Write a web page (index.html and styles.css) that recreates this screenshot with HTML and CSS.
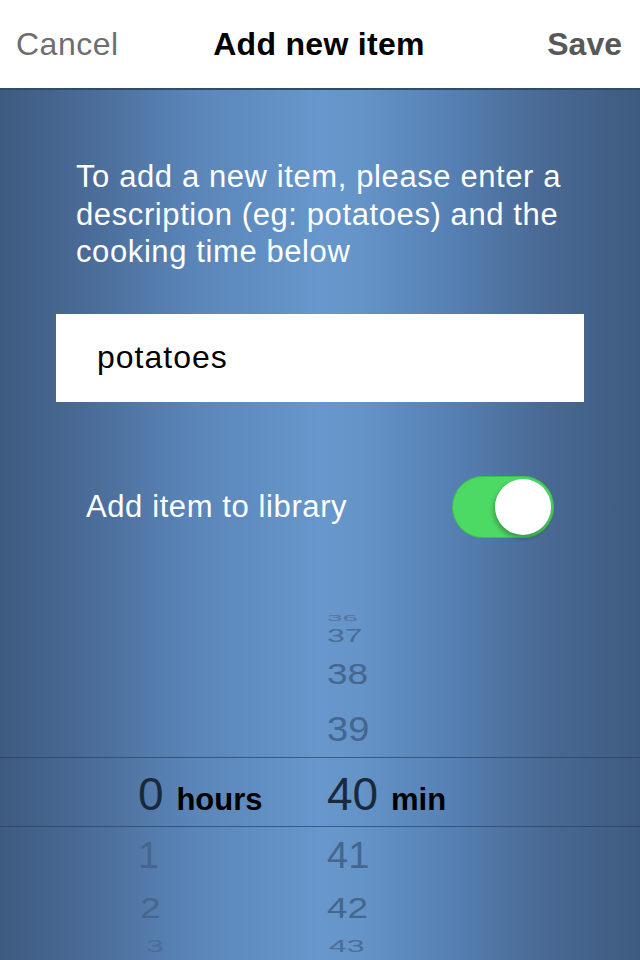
FILE: index.html
```html
<!DOCTYPE html>
<html lang="en">
<head>
<meta charset="UTF-8">
<meta name="viewport" content="width=device-width, initial-scale=1">
<title>Add new item</title>
<link rel="stylesheet" href="styles.css">
</head>
<body>
<div id="screen">
    <div class="navbar">
        <span class="nav-cancel">Cancel</span>
        <span class="nav-title">Add new item</span>
        <span class="nav-save">Save</span>
    </div>

    <div class="content">
        <p class="intro">To add a new item, please enter a description (eg: potatoes) and the cooking time below</p>

        <div class="item-input">potatoes</div>

        <div class="library-row">
            <span class="library-label">Add item to library</span>
            <div class="switch on"><div class="knob"></div></div>
        </div>

        <div class="picker">
            <div class="prow r36"><span class="hcell"></span><span class="mcell">36</span></div>
            <div class="prow r37"><span class="hcell"></span><span class="mcell">37</span></div>
            <div class="prow r38"><span class="hcell"></span><span class="mcell">38</span></div>
            <div class="prow r39"><span class="hcell"></span><span class="mcell">39</span></div>
            <div class="prow selected">
                <span class="hcell">0 <b>hours</b></span>
                <span class="mcell">40 <b>min</b></span>
            </div>
            <div class="prow r41"><span class="hcell">1</span><span class="mcell">41</span></div>
            <div class="prow r42"><span class="hcell">2</span><span class="mcell">42</span></div>
            <div class="prow r43"><span class="hcell">3</span><span class="mcell">43</span></div>
        </div>
    </div>
</div>
</body>
</html>
```

FILE: styles.css
```css
html, body {
    margin:0px;padding:0px;
    height:100%;
}
body {
    font-family: "Liberation Sans", Arial, Helvetica, sans-serif;
    background:#4a6a93;
    overflow:hidden;
}
#screen {
    width:640px;height:960px;
    display:flex;flex-direction:column;
}

/* top bar */
.navbar {
    height:88px;
    background:#fff;
    display:grid;
    grid-template-columns:1fr auto 1fr;
    align-items:center;
    padding:0px 18px 0px 16px;
    border-bottom:2px solid #2f4b6d;
    font-size:32px;
}
.nav-cancel { color:#6e6e6e; letter-spacing:0.5px; }
.nav-title { color:#000; font-weight:bold; letter-spacing:0.3px; }
.nav-save { color:#585858; font-weight:bold; text-align:right; }

/* blue body */
.content {
    flex:1;
    background: linear-gradient(to right, #3e5a7f 0%, #4a6c98 14%, #5a85b8 30%, #6797cc 50%, #6594c8 56%, #5681b5 70%, #4a6b96 84%, #3e5a7f 100%);
    display:flex;flex-direction:column;
    overflow:hidden;
}
.intro {
    margin:68px 40px 0px 76px;
    color:#fff;
    font-size:31px;
    line-height:37.5px;
    letter-spacing:0.6px;
}
.item-input {
    margin:43px 56px 0px 56px;
    height:88px;
    background:#fff;
    color:#000;
    font-size:32px;
    letter-spacing:1px;
    display:flex;align-items:center;
    padding-left:41px;
}

.library-row {
    margin:74px 86px 0px 86px;
    display:flex;align-items:center;justify-content:space-between;
    height:62px;
}
.library-label { color:#fff; font-size:31px; letter-spacing:0.6px; }
.switch {
    width:102px;height:62px;
    border-radius:31px;
    background:#4cd964;
    position:relative;
    box-shadow: inset 0 0 0 1px rgba(40,140,60,0.35);
}
.switch .knob {
    position:absolute;
    top:3px;right:3px;
    width:56px;height:56px;
    border-radius:50%;
    background:#fff;
    box-shadow: -1px 3px 5px rgba(0,0,0,0.3);
}

/* time picker */
.picker {
    margin-top:72px;
    display:flex;flex-direction:column;
}
.prow {
    display:flex;align-items:center;
    color:#44668f;
    font-size:38px;
}
.prow .hcell { width:189px; margin-left:138px; }
.prow .mcell { flex:1; }
.r36 { height:16px; font-size:28px; transform:scaleY(0.3); color:#5577a0; }
.r37 { height:20px; font-size:32px; transform:scaleY(0.55); color:#4b6d96; }
.r38 { height:56px; font-size:37px; transform:scaleY(0.8); }
.r39 { height:55px; font-size:38px; transform:scaleY(0.94); }
.r41 { height:58px; font-size:38px; transform:scaleY(0.96); }
.r42 { height:48px; font-size:37px; transform:scaleY(0.78); }
.r43 { height:26px; font-size:32px; transform:scaleY(0.5); color:#4b6d96; }
.r42 .hcell { margin-left:140px; width:187px; }
.r43 .hcell { margin-left:146px; width:183px; }
.prow.selected {
    height:70px;
    border-top:1px solid rgba(40,65,100,0.7);
    border-bottom:1px solid rgba(40,65,100,0.7);
    color:#1a2a3c;
    font-size:46px;
    align-items:baseline;
    padding-top:9px;
    box-sizing:border-box;
}
.prow.selected b {
    color:#000;
    font-size:31px;
}
```
